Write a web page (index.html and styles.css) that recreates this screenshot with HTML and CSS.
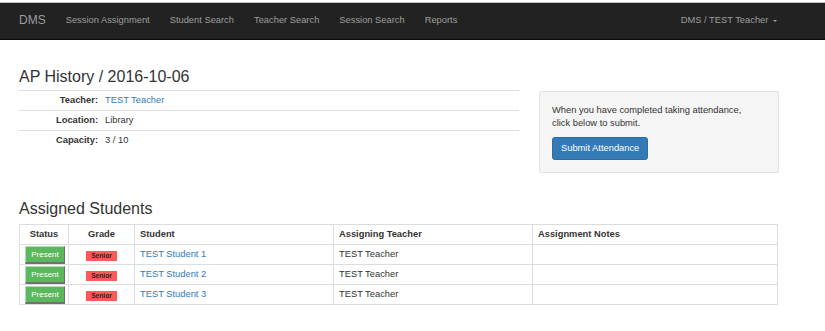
FILE: index.html
```html
<!DOCTYPE html>
<html>
  <head>
    <title>AP History / 2016-10-06</title>
    <link rel="stylesheet" href="styles.css">
  </head>
  <body>
    <div class="topline"></div>
    <nav class="navbar">
      <a class="brand" href="#">DMS</a>
      <ul class="nav">
        <li><a href="#">Session Assignment</a></li>
        <li><a href="#">Student Search</a></li>
        <li><a href="#">Teacher Search</a></li>
        <li><a href="#">Session Search</a></li>
        <li><a href="#">Reports</a></li>
      </ul>
      <a class="user-menu" href="#">DMS / TEST Teacher <span class="caret"></span></a>
    </nav>

    <div class="container">
      <div class="session-row">
        <div>
          <h3>AP History / 2016-10-06</h3>
          <table class="info-table">
            <tr>
              <th>Teacher:</th>
              <td><a href="#">TEST Teacher</a></td>
            </tr>
            <tr>
              <th>Location:</th>
              <td>Library</td>
            </tr>
            <tr>
              <th>Capacity:</th>
              <td>3 / 10</td>
            </tr>
          </table>
        </div>
        <div class="well">
          <p>When you have completed taking attendance,<br />click below to submit.</p>
          <button class="btn-primary" type="button">Submit Attendance</button>
        </div>
      </div>

      <h3>Assigned Students</h3>
      <table class="students">
        <thead>
          <tr>
            <th class="col-status">Status</th>
            <th class="col-grade">Grade</th>
            <th class="col-student">Student</th>
            <th class="col-teacher">Assigning Teacher</th>
            <th>Assignment Notes</th>
          </tr>
        </thead>
        <tbody>
          <tr>
            <td class="center"><button class="btn-present" type="button">Present</button></td>
            <td class="center"><span class="label-senior">Senior</span></td>
            <td><a href="#">TEST Student 1</a></td>
            <td>TEST Teacher</td>
            <td></td>
          </tr>
          <tr>
            <td class="center"><button class="btn-present" type="button">Present</button></td>
            <td class="center"><span class="label-senior">Senior</span></td>
            <td><a href="#">TEST Student 2</a></td>
            <td>TEST Teacher</td>
            <td></td>
          </tr>
          <tr>
            <td class="center"><button class="btn-present" type="button">Present</button></td>
            <td class="center"><span class="label-senior">Senior</span></td>
            <td><a href="#">TEST Student 3</a></td>
            <td>TEST Teacher</td>
            <td></td>
          </tr>
        </tbody>
      </table>
    </div>
  </body>
</html>
```

FILE: styles.css
```css
body {
  font-family: "Liberation Sans", Arial, sans-serif;
  font-size: 9.33px;
  line-height: 13.33px;
  color: #333;
  background: #fff;
  margin: 0;
}
a {
  color: #337ab7;
  text-decoration: none;
}
.topline {
  height: 2px;
  border-bottom: 1px solid #c4c4c4;
}
.navbar {
  display: flex;
  align-items: center;
  height: 37px;
  box-sizing: border-box;
  background: #222;
  border-bottom: 1px solid #080808;
  padding: 0 38px 0 9px;
}
.navbar a {
  color: #9d9d9d;
}
.brand {
  font-size: 12px;
  padding: 0 10px;
}
.nav {
  display: flex;
  list-style: none;
  margin: 0;
  padding: 0;
  flex: 1;
}
.nav a {
  display: block;
  padding: 0 10px;
}
.user-menu {
  padding: 0 10px;
}
.caret {
  display: inline-block;
  width: 0;
  height: 0;
  margin-left: 2px;
  vertical-align: middle;
  border-top: 2.67px solid;
  border-left: 2.67px solid transparent;
  border-right: 2.67px solid transparent;
}
.container {
  padding: 0 0 0 19px;
  width: 760px;
}
h3 {
  font-size: 16px;
  font-weight: 500;
  line-height: 17.6px;
  margin: 13.33px 0 6.67px;
}
.session-row {
  display: grid;
  grid-template-columns: 500px 240px;
  column-gap: 20px;
  align-items: start;
  margin-top: 27.5px;
}
.session-row h3 {
  margin-top: 0;
  margin-bottom: 5.4px;
}
.info-table {
  width: 500px;
  border-collapse: collapse;
}
.info-table th,
.info-table td {
  padding: 3px 0;
  height: 13px;
  line-height: 13px;
  border-top: 1px solid #ddd;
  text-align: left;
}
.info-table th {
  width: 79px;
  text-align: right;
  padding-right: 7px;
}
.well {
  margin-top: 23px;
  margin-bottom: 13.33px;
  padding: 12px;
  background: #f5f5f5;
  border: 1px solid #e3e3e3;
  border-radius: 1px;
}
.well p {
  margin: 0 0 6.67px;
}
.btn-primary {
  font-family: inherit;
  font-size: 9.33px;
  line-height: 13.33px;
  padding: 4px 8px;
  color: #fff;
  background: #337ab7;
  border: 1px solid #2e6da4;
  border-radius: 2.67px;
  cursor: pointer;
}
.students {
  width: 759px;
  table-layout: fixed;
  border-collapse: collapse;
  border: 1px solid #ddd;
}
.students th,
.students td {
  border: 1px solid #ddd;
  padding: 3px 5px;
  line-height: 13px;
  text-align: left;
  vertical-align: middle;
}
.students th {
  font-weight: bold;
}
.students .col-status,
.students .col-grade,
.students .center {
  text-align: center;
}
.students td.center {
  padding-top: 0;
  padding-bottom: 0;
}
.col-status {
  width: 38px;
}
.col-grade {
  width: 55px;
}
.col-student,
.col-teacher {
  width: 188px;
}
.btn-present {
  display: block;
  margin: 0 auto;
  width: 40px;
  height: 18px;
  padding: 0;
  font-family: inherit;
  font-size: 8px;
  line-height: 15px;
  color: #fff;
  background: #5cb85c;
  border-top: 1px solid #b7dcb7;
  border-left: 1px solid #b7dcb7;
  border-right: 1px solid #707070;
  border-bottom: 2px solid #707070;
  border-radius: 0;
}
.label-senior {
  display: inline-block;
  margin-top: 3px;
  padding: 0 4.7px;
  font-size: 6.67px;
  font-weight: bold;
  line-height: 10px;
  color: #222;
  background: #ff5a5a;
  vertical-align: middle;
}
```
